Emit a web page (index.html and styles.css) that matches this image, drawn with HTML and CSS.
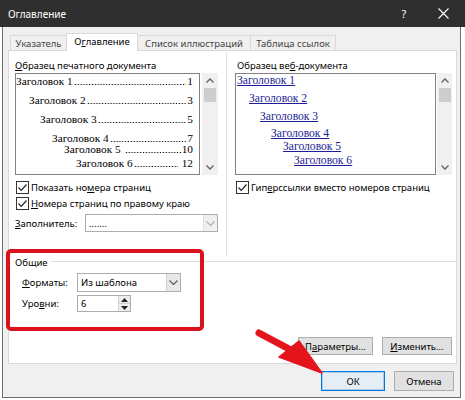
FILE: index.html
```html
<!DOCTYPE html>
<html lang="ru">
<head>
<meta charset="utf-8">
<title>Оглавление</title>
<link rel="stylesheet" href="styles.css">
</head>
<body>
<div class="window">
  <div class="titlebar">
    <span class="title">Оглавление</span>
    <span class="help">?</span>
    <span class="close"><svg width="11" height="11" viewBox="0 0 11 11"><path d="M0.5 0.5 L10.5 10.5 M10.5 0.5 L0.5 10.5" stroke="#fff" stroke-width="1.1" fill="none"/></svg></span>
  </div>
  <div class="frame">
    <div class="tabs">
      <div class="tab t1">Указатель</div>
      <div class="tab sel">О<u>г</u>лавление</div>
      <div class="tab t3">Список иллюстраций</div>
      <div class="tab t4">Таблица ссылок</div>
    </div>
    <div class="panel">
      <div class="columns">
        <div class="col left">
          <div class="label"><u>О</u>бразец печатного документа</div>
          <div class="preview-row">
            <div class="preview print">
              <div class="toc l1"><span class="t">Заголовок 1</span><span class="dots"></span><span class="n">1</span></div>
              <div class="toc l2"><span class="t">Заголовок 2</span><span class="dots"></span><span class="n">3</span></div>
              <div class="toc l3"><span class="t">Заголовок 3</span><span class="dots"></span><span class="n">5</span></div>
              <div class="toc l4"><span class="t">Заголовок 4</span><span class="dots"></span><span class="n">7</span></div>
              <div class="toc l5"><span class="t">Заголовок 5&nbsp;</span><span class="dots"></span><span class="n">10</span></div>
              <div class="toc l6"><span class="t">Заголовок 6</span><span class="dots"></span><span class="n">&nbsp;12</span></div>
            </div>
            <div class="scrollbar">
              <div class="sb-arrow"><svg width="8" height="5" viewBox="0 0 8 5"><path d="M0.5 4.5 L4 1 L7.5 4.5" stroke="#606060" stroke-width="1.3" fill="none"/></svg></div>
              <div class="sb-thumb"></div>
              <div class="sb-space"></div>
              <div class="sb-arrow"><svg width="8" height="5" viewBox="0 0 8 5"><path d="M0.5 0.5 L4 4 L7.5 0.5" stroke="#606060" stroke-width="1.3" fill="none"/></svg></div>
            </div>
          </div>
          <div class="check-row"><span class="cb"><svg width="11" height="11" viewBox="0 0 11 11"><path d="M1.5 5.5 L4.2 8.3 L9.5 2.5" stroke="#222" stroke-width="1.2" fill="none"/></svg></span><span>Показать но<u>м</u>ера страниц</span></div>
          <div class="check-row"><span class="cb"><svg width="11" height="11" viewBox="0 0 11 11"><path d="M1.5 5.5 L4.2 8.3 L9.5 2.5" stroke="#222" stroke-width="1.2" fill="none"/></svg></span><span><u>Н</u>омера страниц по правому краю</span></div>
          <div class="field-row filler">
            <span class="field-label"><u>З</u>аполнитель:</span>
            <div class="combo wide">
              <span class="combo-value">.......</span>
              <span class="combo-btn light"><svg width="9" height="5" viewBox="0 0 9 5"><path d="M0.5 0.5 L4.5 4.5 L8.5 0.5" stroke="#b0b0b0" stroke-width="1.1" fill="none"/></svg></span>
            </div>
          </div>
        </div>
        <div class="vsep"></div>
        <div class="col right">
          <div class="label rlabel">Образец ве<u>б</u>-документа</div>
          <div class="preview-row">
            <div class="preview web">
              <div class="lnk w1">Заголовок 1</div>
              <div class="lnk w2">Заголовок 2</div>
              <div class="lnk w3">Заголовок 3</div>
              <div class="lnk w4">Заголовок 4</div>
              <div class="lnk w5">Заголовок 5</div>
              <div class="lnk w6">Заголовок 6</div>
            </div>
            <div class="scrollbar narrow">
              <div class="sb-arrow"><svg width="8" height="5" viewBox="0 0 8 5"><path d="M0.5 4.5 L4 1 L7.5 4.5" stroke="#606060" stroke-width="1.3" fill="none"/></svg></div>
              <div class="sb-thumb"></div>
              <div class="sb-space"></div>
              <div class="sb-arrow"><svg width="8" height="5" viewBox="0 0 8 5"><path d="M0.5 0.5 L4 4 L7.5 0.5" stroke="#606060" stroke-width="1.3" fill="none"/></svg></div>
            </div>
          </div>
          <div class="check-row"><span class="cb"><svg width="11" height="11" viewBox="0 0 11 11"><path d="M1.5 5.5 L4.2 8.3 L9.5 2.5" stroke="#222" stroke-width="1.2" fill="none"/></svg></span><span>Гип<u>е</u>рссылки вместо номеров страниц</span></div>
        </div>
      </div>
      <div class="group">
        <div class="group-head"><span class="group-title">Общие</span><span class="group-line"></span></div>
        <div class="field-row g1">
          <span class="field-label g"><u>Ф</u>орматы:</span>
          <div class="combo fmt">
            <span class="combo-value">Из шаблона</span>
            <span class="combo-btn"><svg width="9" height="5" viewBox="0 0 9 5"><path d="M0.5 0.5 L4.5 4.5 L8.5 0.5" stroke="#555" stroke-width="1.1" fill="none"/></svg></span>
          </div>
        </div>
        <div class="field-row g2">
          <span class="field-label g">Уро<u>в</u>ни:</span>
          <div class="spin">
            <span class="spin-value">6</span>
            <span class="spin-btns">
              <span class="spin-b"><svg width="7" height="4" viewBox="0 0 7 4"><path d="M0 4 L3.5 0 L7 4 Z" fill="#222"/></svg></span>
              <span class="spin-b"><svg width="7" height="4" viewBox="0 0 7 4"><path d="M0 0 L3.5 4 L7 0 Z" fill="#222"/></svg></span>
            </span>
          </div>
        </div>
      </div>
      <div class="panel-buttons">
        <div class="btn params">П<u>а</u>раметры...</div>
        <div class="btn change"><u>И</u>зменить...</div>
      </div>
    </div>
    <div class="footer">
      <div class="btn ok">ОК</div>
      <div class="btn cancel">Отмена</div>
    </div>
  </div>
  <div class="highlight"></div>
  <svg class="arrow" width="465" height="400" viewBox="0 0 465 400">
    <path d="M259 333 L291 350" stroke="#e3141c" stroke-width="7" stroke-linecap="round" fill="none"/>
    <path d="M279 357 L299 341 L322 373 Z" fill="#e3141c" stroke="#e3141c" stroke-width="1.5" stroke-linejoin="round"/>
  </svg>
</div>
</body>
</html>
```
FILE: styles.css
```css
* { box-sizing: border-box; }
html, body { margin: 0; padding: 0; background: #fff; }
.window {
  position: relative;
  width: 465px;
  height: 400px;
  overflow: hidden;
  background: #fff;
  font-family: "Noto Sans", "Open Sans", sans-serif;
  font-size: 9.5px;
  color: #000;
}
u { text-decoration: underline; text-underline-offset: 1px; }

.titlebar {
  height: 27px;
  background: #2f2f2f;
  color: #fff;
  display: flex;
  align-items: center;
  padding-left: 8px;
  font-size: 10px;
}
.title { flex: 1; }
.help { width: 20px; text-align: center; font-size: 11px; margin-right: 19px; }
.close { width: 20px; display: flex; justify-content: center; margin-right: 12px; }

.frame {
  margin-left: 2px;
  width: 459px;
  height: 371px;
  background: #f0f0f0;
  border-left: 1px solid #6f6f6f;
  border-right: 1px solid #6f6f6f;
  border-bottom: 1px solid #6f6f6f;
}

.tabs {
  height: 24px;
  display: flex;
  align-items: flex-end;
  padding-left: 7px;
}
.tab {
  height: 15px;
  margin-bottom: 1px;
  border: 1px solid #d9d9d9;
  border-bottom: none;
  background: #f0f0f0;
  color: #444;
  display: flex;
  align-items: center;
  justify-content: center;
  line-height: 13px;
}
.t1 { width: 57px; }
.tab.sel {
  width: 72px;
  height: 18px;
  margin-bottom: 0;
  margin-left: -1px;
  margin-right: -1px;
  background: #fff;
  color: #000;
  position: relative;
  z-index: 1;
  padding-bottom: 2px;
}
.t3 { width: 114px; }
.t4 { width: 86px; margin-left: -1px; }

.panel {
  margin-top: -1px;
  margin-left: 5px;
  width: 449px;
  height: 314px;
  background: #fff;
  border: 1px solid #d9d9d9;
  padding: 0 4px 0 6px;
}

.columns { display: flex; height: 206px; }
.col { padding-top: 8px; }
.col.left { width: 203px; }
.col.right { width: 217px; }
.vsep { width: 1px; background: #dedede; margin: 1px 8px 0 8px; }

.label { height: 14px; line-height: 14px; }
.rlabel { padding-left: 2px; }

.preview-row { display: flex; height: 102px; }
.preview {
  border: 1px solid #828282;
  background: #fff;
  overflow: hidden;
}
.print { width: 185px; font-family: "Liberation Serif", serif; font-size: 11.3px; padding-right: 6px; }
.web { width: 201px; font-family: "Liberation Serif", serif; font-size: 11.6px; }

.toc { display: flex; height: 12px; line-height: 12px; white-space: nowrap; }
.toc .t { flex: none; }
.toc .dots {
  flex: 1;
  margin: 0 1px;
  background-image: radial-gradient(circle, #111 0.7px, transparent 1px);
  background-size: 2.85px 3px;
  background-repeat: repeat-x;
  background-position: 0 8px;
}
.toc .n { flex: none; }
.l1 { margin-top: 1px; padding-left: 0; }
.l2 { margin-top: 7px; padding-left: 13px; }
.l3 { margin-top: 7px; padding-left: 24px; }
.l4 { margin-top: 7px; padding-left: 36px; }
.l5 { margin-top: -1px; padding-left: 48px; }
.l6 { margin-top: 2px; padding-left: 60px; }

.lnk {
  height: 12px;
  line-height: 12px;
  color: #1d1d96;
  text-decoration: underline;
  white-space: nowrap;
}
.w1 { margin-top: 1px; padding-left: 1px; }
.w2 { margin-top: 6px; padding-left: 13px; }
.w3 { margin-top: 6px; padding-left: 24px; }
.w4 { margin-top: 5px; padding-left: 35px; }
.w5 { margin-top: 1px; padding-left: 47px; }
.w6 { margin-top: 2px; padding-left: 58px; }

.scrollbar {
  width: 16px;
  margin-left: 2px;
  background: #f0f0f0;
  display: flex;
  flex-direction: column;
  align-items: center;
}
.scrollbar.narrow { width: 15px; margin-left: 1px; }
.sb-arrow { height: 15px; width: 100%; display: flex; align-items: center; justify-content: center; }
.sb-thumb { width: 12px; height: 14px; background: #cdcdcd; }
.sb-space { flex: 1; }

.check-row {
  display: flex;
  align-items: center;
  height: 16px;
  margin-top: 4px;
}
.check-row + .check-row { margin-top: 0; }
.cb {
  width: 13px;
  height: 13px;
  border: 1px solid #333;
  background: #fff;
  margin-right: 2px;
  margin-left: 1px;
  display: flex;
  align-items: center;
  justify-content: center;
}

.field-row { display: flex; align-items: center; }
.filler { margin-top: 3px; height: 18px; }
.field-label { width: 70px; }
.field-label.g { width: 55px; }

.combo {
  height: 100%;
  display: flex;
  border: 1px solid #adadad;
  background: #fff;
}
.combo.wide { width: 133px; }
.combo-value { flex: 1; padding-left: 3px; display: flex; align-items: center; }
.combo-btn {
  width: 14px;
  background: #e8e8e8;
  border-left: 1px solid #cfcfcf;
  display: flex;
  align-items: center;
  justify-content: center;
}
.combo-btn.light { background: #f0f0f0; border-left-color: #e0e0e0; }

.group { height: 54px; }
.group-head { display: flex; height: 12px; align-items: flex-start; margin-right: -4px; }
.group-title { line-height: 12px; }
.group-line { flex: 1; border-top: 1px solid #dcdcdc; margin-top: 4px; margin-left: 3px; }
.g1 { margin-top: 4px; height: 19px; padding-left: 7px; }
.g2 { margin-top: 3px; height: 17px; padding-left: 7px; }
.combo.fmt { width: 104px; }
.spin {
  width: 54px;
  height: 100%;
  display: flex;
  border: 1px solid #adadad;
  background: #fff;
}
.spin-value { flex: 1; padding-left: 3px; display: flex; align-items: center; }
.spin-btns { width: 12px; display: flex; flex-direction: column; border-left: 1px solid #d0d0d0; }
.spin-b { flex: 1; display: flex; align-items: center; justify-content: center; background: #eeeeee; }
.spin-b + .spin-b { border-top: 1px solid #d0d0d0; }

.panel-buttons {
  display: flex;
  justify-content: flex-end;
  gap: 9px;
  margin-top: 26px;
}
.btn {
  height: 18px;
  background: #e1e1e1;
  border: 1px solid #adadad;
  display: flex;
  align-items: center;
  justify-content: center;
}
.params { width: 75px; }
.change { width: 70px; }

.footer {
  display: flex;
  justify-content: flex-end;
  gap: 9px;
  padding-top: 7px;
  padding-right: 6px;
}
.footer .btn { height: 20px; }
.ok { width: 64px; border-color: #0078d7; box-shadow: inset 0 0 0 1px #a9cdee; background: #e5edf5; }
.cancel { width: 60px; }

.highlight {
  position: absolute;
  left: 6px;
  top: 249px;
  width: 198px;
  height: 82px;
  border: 4px solid #d9121b;
  border-radius: 5px;
}
.arrow { position: absolute; left: 0; top: 0; }
```
